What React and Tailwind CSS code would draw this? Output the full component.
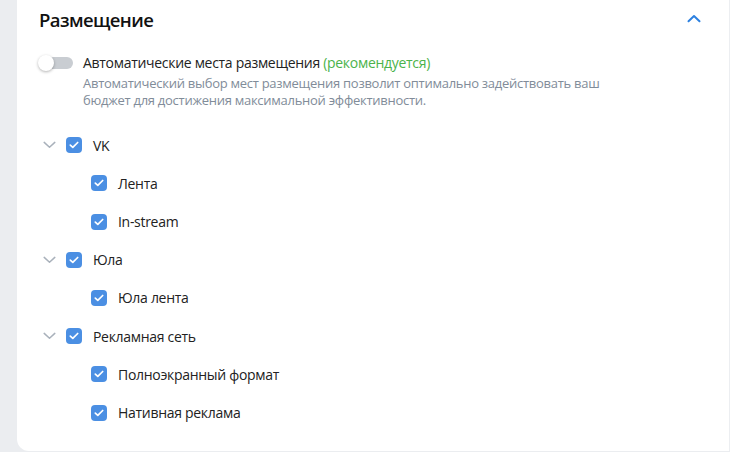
import React from 'react';

const Check = () => (
  <span className="flex h-[16px] w-[16px] shrink-0 items-center justify-center rounded-[4px] bg-[#4b8fe3]">
    <svg width="10" height="8" viewBox="0 0 10 8" fill="none">
      <path d="M1.3 4.1 3.8 6.4 8.7 1.5" stroke="#fff" strokeWidth="1.7" strokeLinecap="round" strokeLinejoin="round" />
    </svg>
  </span>
);

const ChevronDown = () => (
  <svg width="13" height="8" viewBox="0 0 13 8" fill="none">
    <path d="M1.2 1.4 6.5 6.2 11.8 1.4" stroke="#a9b1bb" strokeWidth="1.5" strokeLinecap="round" strokeLinejoin="round" />
  </svg>
);

const groups = [
  { name: 'VK', items: ['Лента', 'In-stream'] },
  { name: 'Юла', items: ['Юла лента'] },
  { name: 'Рекламная сеть', items: ['Полноэкранный формат', 'Нативная реклама'] },
];

const App = () => {
  return (
    <div className="flex h-[452px] w-[730px] bg-[#ebedf0] pl-[17px] text-[#222] [font-family:'Open_Sans',sans-serif]">
      <div className="mb-[1px] flex flex-1 flex-col rounded-bl-xl border-r border-[#eceef1] bg-white pl-[22px] pr-[28px]">
        {/* Header */}
        <div className="flex h-[28px] items-center justify-between mt-[6px]">
          <h2 className="text-[18.5px] font-semibold leading-[28px] tracking-[-0.6px] text-[#111]">Размещение</h2>
          <svg width="14" height="9" viewBox="0 0 14 9" fill="none" className="mt-[-4px]">
            <path d="M1.5 7.3 7 2 12.5 7.3" stroke="#2d81e0" strokeWidth="2" strokeLinecap="round" strokeLinejoin="round" />
          </svg>
        </div>

        {/* Auto placements */}
        <div className="mt-[19px] flex">
          <div className="relative -ml-[1px] mt-[2px] h-[16px] w-[35px] shrink-0">
            <div className="absolute left-[5px] top-[2px] h-[12px] w-[30px] rounded-full bg-[#c9cdd2]" />
            <div className="absolute left-0 top-0 h-[16px] w-[16px] rounded-full bg-white shadow-[0_1px_3px_rgba(0,0,0,0.3)]" />
          </div>
          <div className="ml-[10px]">
            <p className="text-[14px] leading-[20px] tracking-[-0.3px]">
              Автоматические места размещения <span className="text-[#4bb34b]">(рекомендуется)</span>
            </p>
            <p className="mt-[2px] text-[13px] leading-[17px] tracking-[-0.27px] text-[#818c99]">
              Автоматический выбор мест размещения позволит оптимально задействовать ваш
              <br />
              бюджет для достижения максимальной эффективности.
            </p>
          </div>
        </div>

        {/* Tree */}
        <div className="mt-[17px] flex flex-col text-[14px] tracking-[-0.3px]">
          {groups.map((g) => (
            <div key={g.name} className="flex flex-col">
              <div className="flex h-[38px] items-center">
                <span className="flex w-[20px] justify-center">
                  <ChevronDown />
                </span>
                <span className="ml-[7px]">
                  <Check />
                </span>
                <span className="ml-[11px]">{g.name}</span>
              </div>
              {g.items.map((it) => (
                <div key={it} className="flex h-[38.4px] items-center pl-[52px]">
                  <Check />
                  <span className="ml-[11px]">{it}</span>
                </div>
              ))}
            </div>
          ))}
        </div>
      </div>
    </div>
  );
};

export default App;
